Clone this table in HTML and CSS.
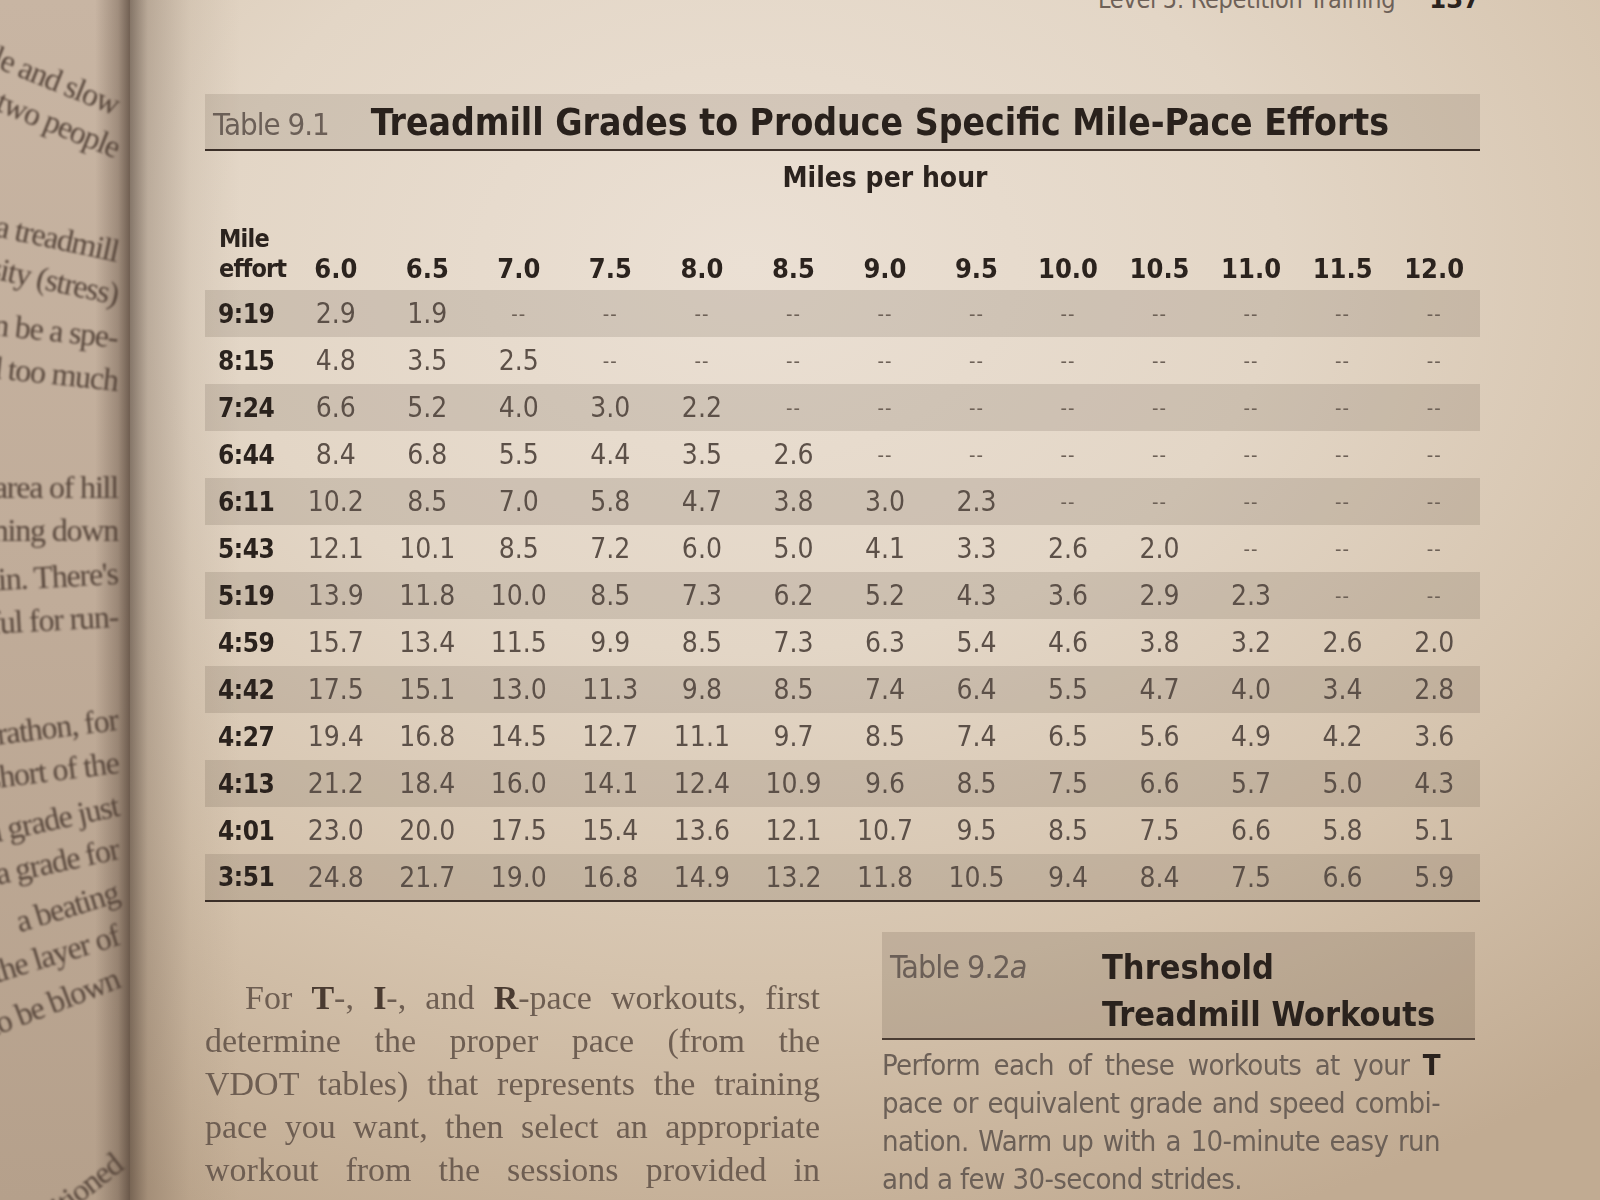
FILE: index.html
```html
<!DOCTYPE html>
<html lang="en">
<head>
<meta charset="utf-8">
<title>Table 9.1 Treadmill Grades to Produce Specific Mile-Pace Efforts</title>
<link rel="stylesheet" href="styles.css">
</head>
<body>
<div class="spread">
  <aside class="left-page">
    <div class="lp-text">
      <span class="ln rot-a">circle and slow</span>
      <span class="ln rot-a">with two people</span>
      <span class="gap g1"></span>
      <span class="ln rot-b">on a treadmill</span>
      <span class="ln rot-b">intensity (stress)</span>
      <span class="ln rot-c">can be a spe-</span>
      <span class="ln rot-c">and too much</span>
      <span class="gap g2"></span>
      <span class="ln rot-d">area of hill</span>
      <span class="ln rot-d">running down</span>
      <span class="ln rot-e">again. There's</span>
      <span class="ln rot-e">useful for run-</span>
      <span class="gap g1"></span>
      <span class="ln rot-f">marathon, for</span>
      <span class="ln rot-f">short of the</span>
      <span class="ln rot-g">a grade just</span>
      <span class="ln rot-g">a grade for</span>
      <span class="ln rot-h">a beating</span>
      <span class="ln rot-h">the layer of</span>
      <span class="ln rot-i">to be blown</span>
      <span class="gap g3"></span>
      <span class="ln rot-j">positioned</span>
    </div>
  </aside>

  <main class="page">
    <header class="running-head">
      <span class="rh-title">Level 5: Repetition Training</span>
      <span class="rh-num">137</span>
    </header>

    <section class="table-block">
      <div class="title-bar">
        <span class="tnum">Table 9.1</span>
        <h1 class="ttitle">Treadmill Grades to Produce Specific Mile-Pace Efforts</h1>
      </div>

      <table class="grades">
        <colgroup>
          <col class="c-label">
          <col><col><col><col><col><col><col><col><col><col><col><col><col>
        </colgroup>
        <thead>
          <tr class="mph-row">
            <th></th>
            <th colspan="13" class="mph">Miles per hour</th>
          </tr>
          <tr class="colhead">
            <th class="effort">Mile<br>effort</th>
            <th>6.0</th><th>6.5</th><th>7.0</th><th>7.5</th><th>8.0</th><th>8.5</th><th>9.0</th><th>9.5</th><th>10.0</th><th>10.5</th><th>11.0</th><th>11.5</th><th>12.0</th>
          </tr>
        </thead>
        <tbody>
          <tr class="shade"><th>9:19</th><td>2.9</td><td>1.9</td><td class="na">--</td><td class="na">--</td><td class="na">--</td><td class="na">--</td><td class="na">--</td><td class="na">--</td><td class="na">--</td><td class="na">--</td><td class="na">--</td><td class="na">--</td><td class="na">--</td></tr>
          <tr><th>8:15</th><td>4.8</td><td>3.5</td><td>2.5</td><td class="na">--</td><td class="na">--</td><td class="na">--</td><td class="na">--</td><td class="na">--</td><td class="na">--</td><td class="na">--</td><td class="na">--</td><td class="na">--</td><td class="na">--</td></tr>
          <tr class="shade"><th>7:24</th><td>6.6</td><td>5.2</td><td>4.0</td><td>3.0</td><td>2.2</td><td class="na">--</td><td class="na">--</td><td class="na">--</td><td class="na">--</td><td class="na">--</td><td class="na">--</td><td class="na">--</td><td class="na">--</td></tr>
          <tr><th>6:44</th><td>8.4</td><td>6.8</td><td>5.5</td><td>4.4</td><td>3.5</td><td>2.6</td><td class="na">--</td><td class="na">--</td><td class="na">--</td><td class="na">--</td><td class="na">--</td><td class="na">--</td><td class="na">--</td></tr>
          <tr class="shade"><th>6:11</th><td>10.2</td><td>8.5</td><td>7.0</td><td>5.8</td><td>4.7</td><td>3.8</td><td>3.0</td><td>2.3</td><td class="na">--</td><td class="na">--</td><td class="na">--</td><td class="na">--</td><td class="na">--</td></tr>
          <tr><th>5:43</th><td>12.1</td><td>10.1</td><td>8.5</td><td>7.2</td><td>6.0</td><td>5.0</td><td>4.1</td><td>3.3</td><td>2.6</td><td>2.0</td><td class="na">--</td><td class="na">--</td><td class="na">--</td></tr>
          <tr class="shade"><th>5:19</th><td>13.9</td><td>11.8</td><td>10.0</td><td>8.5</td><td>7.3</td><td>6.2</td><td>5.2</td><td>4.3</td><td>3.6</td><td>2.9</td><td>2.3</td><td class="na">--</td><td class="na">--</td></tr>
          <tr><th>4:59</th><td>15.7</td><td>13.4</td><td>11.5</td><td>9.9</td><td>8.5</td><td>7.3</td><td>6.3</td><td>5.4</td><td>4.6</td><td>3.8</td><td>3.2</td><td>2.6</td><td>2.0</td></tr>
          <tr class="shade"><th>4:42</th><td>17.5</td><td>15.1</td><td>13.0</td><td>11.3</td><td>9.8</td><td>8.5</td><td>7.4</td><td>6.4</td><td>5.5</td><td>4.7</td><td>4.0</td><td>3.4</td><td>2.8</td></tr>
          <tr><th>4:27</th><td>19.4</td><td>16.8</td><td>14.5</td><td>12.7</td><td>11.1</td><td>9.7</td><td>8.5</td><td>7.4</td><td>6.5</td><td>5.6</td><td>4.9</td><td>4.2</td><td>3.6</td></tr>
          <tr class="shade"><th>4:13</th><td>21.2</td><td>18.4</td><td>16.0</td><td>14.1</td><td>12.4</td><td>10.9</td><td>9.6</td><td>8.5</td><td>7.5</td><td>6.6</td><td>5.7</td><td>5.0</td><td>4.3</td></tr>
          <tr><th>4:01</th><td>23.0</td><td>20.0</td><td>17.5</td><td>15.4</td><td>13.6</td><td>12.1</td><td>10.7</td><td>9.5</td><td>8.5</td><td>7.5</td><td>6.6</td><td>5.8</td><td>5.1</td></tr>
          <tr class="shade last"><th>3:51</th><td>24.8</td><td>21.7</td><td>19.0</td><td>16.8</td><td>14.9</td><td>13.2</td><td>11.8</td><td>10.5</td><td>9.4</td><td>8.4</td><td>7.5</td><td>6.6</td><td>5.9</td></tr>
        </tbody>
      </table>
    </section>

    <div class="lower">
      <div class="body-text">
        <span class="bl first">For <b>T</b>-, <b>I</b>-, and <b>R</b>-pace workouts, first</span>
        <span class="bl">determine the proper pace (from the</span>
        <span class="bl">VDOT tables) that represents the training</span>
        <span class="bl">pace you want, then select an appropriate</span>
        <span class="bl">workout from the sessions provided in</span>
      </div>

      <aside class="sidebar">
        <div class="sb-head">
          <span class="sb-num">Table 9.2<i>a</i></span>
          <h2 class="sb-title">Threshold<br>Treadmill Workouts</h2>
        </div>
        <div class="sb-body">
          <span class="sl">Perform each of these workouts at your <b>T</b></span>
          <span class="sl">pace or equivalent grade and speed combi-</span>
          <span class="sl">nation. Warm up with a 10-minute easy run</span>
          <span class="sl sl-last">and a few 30-second strides.</span>
        </div>
      </aside>
    </div>
  </main>
</div>
</body>
</html>
```

FILE: styles.css
```css
html, body {
  margin: 0;
  padding: 0;
  width: 1600px;
  height: 1200px;
  overflow: hidden;
}

body {
  background: #d6c6b2;
  font-family: "Liberation Sans Narrow", "DejaVu Sans Condensed", "Liberation Sans", sans-serif;
  color: #2b231e;
}

.spread {
  display: flex;
  height: 1200px;
}

/* ---------- left (facing) page ---------- */
.left-page {
  flex: none;
  width: 130px;
  height: 1200px;
  overflow: hidden;
  background:
    linear-gradient(to right, rgba(0,0,0,0) 0, rgba(0,0,0,0) 95px, rgba(70,52,40,0.3) 118px, rgba(60,44,34,0.62) 130px),
    linear-gradient(to bottom, #c8b5a3 0%, #c0ac99 50%, #b5a08b 100%);
}

.lp-text {
  width: 420px;
  margin-left: -302px;
  padding-top: 84px;
  display: flex;
  flex-direction: column;
  align-items: flex-end;
  font-family: "Liberation Serif", "DejaVu Serif", serif;
  font-size: 32px;
  line-height: 43px;
  letter-spacing: -1.2px;
  color: #57463b;
  filter: blur(0.8px);
}

.ln {
  display: block;
  white-space: nowrap;
  transform-origin: 100% 50%;
}

.gap { display: block; }
.g1 { height: 60px; }
.g2 { height: 64px; }
.g3 { height: 140px; }

.rot-a { transform: rotate(22deg); }
.rot-b { transform: rotate(12deg); }
.rot-c { transform: rotate(6deg); }
.rot-d { transform: rotate(0deg); }
.rot-e { transform: rotate(-3deg); }
.rot-f { transform: rotate(-7deg); }
.rot-g { transform: rotate(-12deg); }
.rot-h { transform: rotate(-17deg); }
.rot-i { transform: rotate(-21deg); }
.rot-j { transform: rotate(-38deg); }

/* ---------- right page ---------- */
.page {
  flex: 1;
  height: 1200px;
  padding: 0 120px 0 75px;
  box-sizing: border-box;
  background:
    linear-gradient(to right, rgba(60,44,34,0.55) 0, rgba(90,70,55,0.28) 18px, rgba(120,100,80,0.1) 60px, rgba(0,0,0,0) 110px),
    radial-gradient(ellipse 95% 85% at 42% 22%, #ebe0d4 0%, #e3d6c6 38%, #d5c3ad 70%, #c1ab92 100%);
}

.running-head {
  display: flex;
  justify-content: flex-end;
  align-items: baseline;
  height: 24px;
  margin-top: -13px;
  line-height: 24px;
}

.rh-title {
  font-size: 25px;
  color: #6e6158;
  letter-spacing: -0.3px;
}

.rh-num {
  margin-left: 34px;
  font-size: 27px;
  font-weight: bold;
  color: #2b231e;
}

/* ---------- Table 9.1 ---------- */
.table-block {
  margin-top: 83px;
  filter: blur(0.4px);
}

.title-bar {
  display: flex;
  align-items: baseline;
  height: 57px;
  padding: 0 0 0 8px;
  box-sizing: border-box;
  background: rgba(70,55,42,0.13);
  border-bottom: 2px solid #3b2f28;
}

.tnum {
  font-size: 31px;
  line-height: 60px;
  color: #6b5f57;
  letter-spacing: -1px;
}

.ttitle {
  margin: 0 0 0 42px;
  font-size: 37px;
  line-height: 57px;
  font-weight: bold;
  color: #29211c;
}

.grades {
  width: 100%;
  table-layout: fixed;
  border-collapse: collapse;
  border-spacing: 0;
}

.c-label { width: 85px; }

.mph-row th {
  height: 52px;
  padding: 0;
}

.mph {
  font-size: 28px;
  font-weight: bold;
  color: #2b231e;
  text-align: center;
  vertical-align: middle;
}

.colhead th {
  height: 81px;
  padding: 0 0 6px;
  vertical-align: bottom;
  text-align: center;
  font-size: 27px;
  font-weight: bold;
  color: #2b231e;
  line-height: 30px;
}

.colhead th.effort {
  text-align: left;
  padding-left: 14px;
  font-size: 25px;
  letter-spacing: -0.8px;
}

.grades tbody tr {
  height: 47px;
}

.grades tbody tr.shade {
  background: rgba(72,58,46,0.15);
}

.grades tbody tr.last {
  border-bottom: 2px solid #3b2f28;
}

.grades tbody th {
  padding: 0 0 0 13px;
  text-align: left;
  font-size: 26px;
  font-weight: bold;
  color: #2a221d;
  letter-spacing: -0.5px;
}

.grades td {
  padding: 0;
  text-align: center;
  font-size: 28px;
  color: #5c5048;
}

.grades td.na {
  font-size: 20px;
  color: #6d6157;
  letter-spacing: 1px;
}

/* ---------- lower area ---------- */
.lower {
  display: flex;
  gap: 62px;
  margin-top: 30px;
}

.body-text {
  flex: none;
  width: 615px;
  margin-top: 44px;
  font-family: "Liberation Serif", "DejaVu Serif", serif;
  font-size: 34px;
  line-height: 43px;
  color: #6e5e52;
  filter: blur(0.6px);
}

.bl {
  display: block;
  white-space: nowrap;
  text-align: justify;
  text-align-last: justify;
}

.bl.first { padding-left: 40px; }

.bl b { color: #4a3b31; }

.sidebar {
  flex: none;
  width: 593px;
}

.sb-head {
  display: flex;
  align-items: flex-start;
  height: 108px;
  padding: 12px 0 0 8px;
  box-sizing: border-box;
  background: rgba(70,55,42,0.15);
  border-bottom: 2px solid #4a3c33;
  filter: blur(0.4px);
}

.sb-num {
  flex: none;
  width: 212px;
  font-size: 32px;
  line-height: 47px;
  color: #6b5f57;
  letter-spacing: -1px;
}

.sb-num i { font-style: italic; }

.sb-title {
  margin: 0;
  font-size: 34px;
  line-height: 47px;
  font-weight: bold;
  color: #2a221d;
}

.sb-body {
  width: 558px;
  padding-top: 6px;
  font-size: 29px;
  line-height: 38px;
  letter-spacing: -0.6px;
  color: #6c6057;
  filter: blur(0.7px);
}

.sl {
  display: block;
  white-space: nowrap;
  text-align: justify;
  text-align-last: justify;
}

.sl.sl-last { text-align-last: left; }

.sl b { color: #2a221d; }
```
